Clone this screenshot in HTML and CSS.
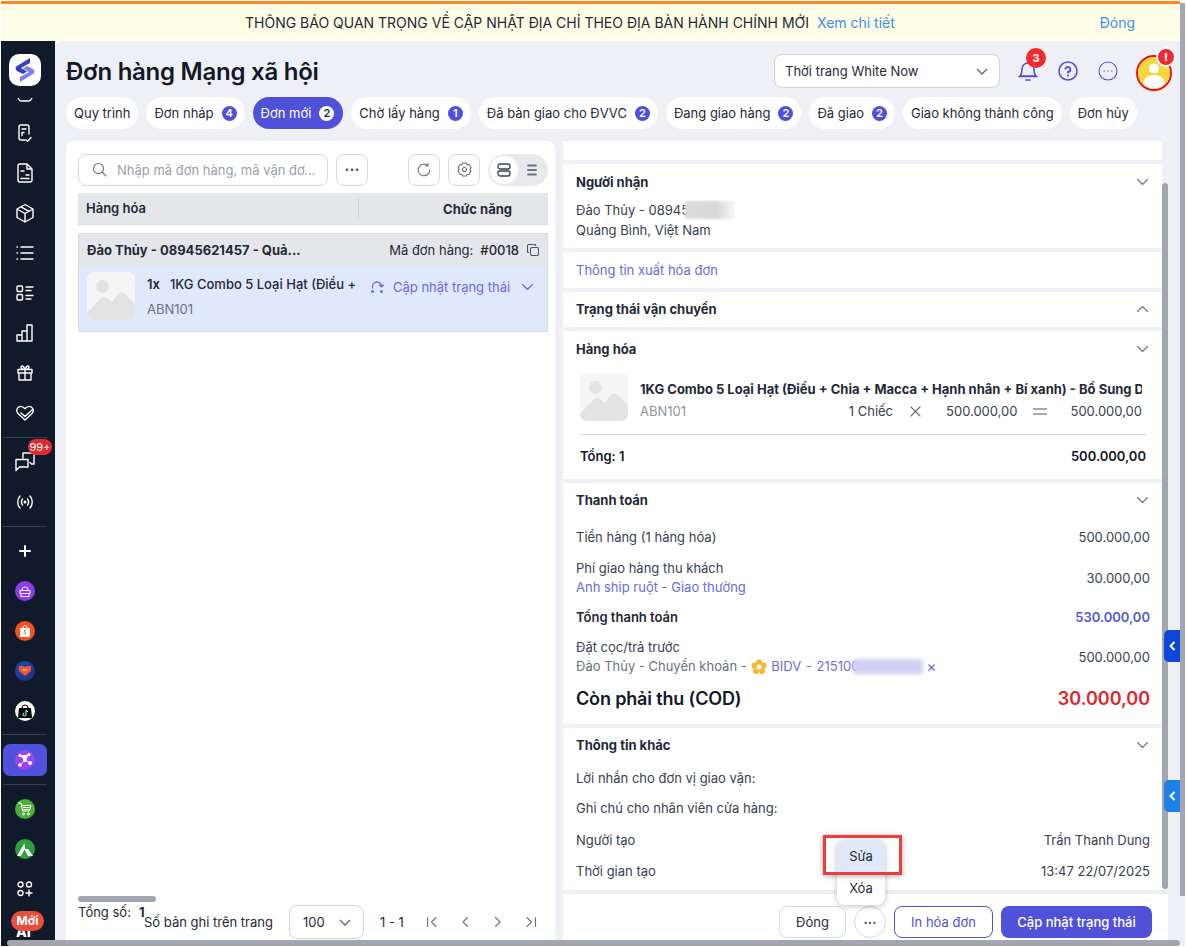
FILE: index.html
```html
<!DOCTYPE html>
<html lang="vi">
<head>
<meta charset="utf-8">
<title>Đơn hàng Mạng xã hội</title>
<link rel="stylesheet" href="styles.css">
</head>
<body>
<div class="app">
  <div class="banner">
    <div class="banner-center">
      <span>THÔNG BÁO QUAN TRỌNG VỀ CẬP NHẬT ĐỊA CHỈ THEO ĐỊA BÀN HÀNH CHÍNH MỚI</span>
      <a class="banner-link">Xem chi tiết</a>
    </div>
    <a class="banner-close">Đóng</a>
  </div>
  <div class="shell">
    <aside class="sidebar">
      <div class="logo"><svg width="22" height="26" viewBox="0 0 22 26"><path d="M16 1 3 9c-2 1.500-2 3.500 0 5l6 3 4-2.500-6-3.500 9-5z" fill="#3b3fb8"/><path d="M6 25l13-8c2-1.500 2-3.500 0-5l-6-3-4 2.500 6 3.500-9 5z" fill="#7c7ff0"/></svg></div>
      <div class="side-clip"><svg width="16" height="4" viewBox="0 0 16 4"><path d="M1 0c1 2 2 3 3 3h8c1 0 2-1 3-3" fill="none" stroke="#fff" stroke-width="1.400"/></svg></div>
      <div class="side-item"><svg width="18" height="18" viewBox="0 0 18 18" class="si"><path d="M9 16H5a2 2 0 0 1-2-2V3a2 2 0 0 1 2-2h6a2 2 0 0 1 2 2v7M6 5h4M6 8.500h2M6 8.500v3M10 16l1.500 1.200L15 13.500"/></svg></div>
      <div class="side-item"><svg width="18" height="20" viewBox="0 0 18 20" class="si"><path d="M11 1H4a2 2 0 0 0-2 2v14a2 2 0 0 0 2 2h10a2 2 0 0 0 2-2V6zM11 1v5h5M5 8h3M10 12h3M5 15.500h8"/></svg></div>
      <div class="side-item"><svg width="20" height="20" viewBox="0 0 20 20" class="si"><path d="M10 1.500 18 6v8.500l-8 4.500-8-4.500V6zM2 6l8 4.500L18 6M10 10.500V19M6 3.800l8 4.500"/></svg></div>
      <div class="side-item"><svg width="18" height="16" viewBox="0 0 18 16" class="si"><path d="M5 2h12M5 8h12M5 14h12M1 2h.500M1 8h.500M1 14h.500"/></svg></div>
      <div class="side-item"><svg width="18" height="16" viewBox="0 0 18 16" class="si"><rect x="1" y="1" width="5.500" height="5.500" rx="1"/><rect x="1" y="9.500" width="5.500" height="5.500" rx="1"/><path d="M10 2h7M10 5.500h5M10 10.500h7M10 14h5"/></svg></div>
      <div class="side-item"><svg width="18" height="18" viewBox="0 0 18 18" class="si"><path d="M1 11h5v6H1zM6 7h5v10H6zM11 1h5v16h-5z" stroke-linejoin="round"/></svg></div>
      <div class="side-item"><svg width="18" height="18" viewBox="0 0 18 18" class="si"><path d="M2 5.500h14v3.500H2zM3 9v7h12V9M9 5.500V16M9 5.500C7 5.500 5 4.500 5 3s2.500-2 4 2.500C10.500 1 13 1.500 13 3s-2 2.500-4 2.500"/></svg></div>
      <div class="side-item"><svg width="18" height="16" viewBox="0 0 18 16" class="si"><path d="M9 15 2 8.500C0 6.500.500 3 3 1.800 5.500.700 7.500 2 9 3.800c1.500-1.800 3.500-3.100 6-2 2.500 1.200 3 4.700 1 6.700zM5 8l4 3.500L16 5"/></svg></div>
      <div class="side-rule"></div>
      <div class="side-item side-chat">
        <svg width="20" height="20" viewBox="0 0 20 20" class="si chat-icon"><path d="M8 6V1h11v11h-2.500l-1.500-1.500"/><path d="M1 7.500h12V15H4.500L1 18.500z"/></svg>
        <span class="chat-badge">99+</span>
      </div>
      <div class="side-item"><svg width="18" height="14" viewBox="0 0 18 14" class="si"><path d="M4 1C1 4 1 10 4 13M14 1c3 3 3 9 0 12M6.500 4c-1.500 2-1.500 4 0 6M11.500 4c1.500 2 1.500 4 0 6"/><circle cx="9" cy="7" r=".8" fill="#fff"/></svg></div>
      <div class="side-rule rule-b"></div>
      <div class="side-item side-plus"><svg width="12" height="12" viewBox="0 0 12 12" class="si thick"><path d="M6 1v10M1 6h10"/></svg></div>
      <div class="side-item"><span class="dot dot-purple"><svg width="12" height="13" viewBox="0 0 12 13" class="si pale"><path d="M3 5a3 3 0 0 1 6 0M1 5.500h10v3H1zM2 8.500v3h8v-3"/></svg></span></div>
      <div class="side-item"><span class="dot dot-orange"><svg width="12" height="14" viewBox="0 0 12 14"><path d="M1 4h10v9H1z" fill="#fff"/><path d="M4 4a2 2.500 0 0 1 4 0" fill="none" stroke="#fff"/><path d="M7.500 6.500C6 5.500 4.500 6.500 6 8c1.500 1 0 2.500-1.500 1.500" fill="none" stroke="#ee4d2d"/></svg></span></div>
      <div class="side-item"><span class="dot dot-lazada"><svg width="14" height="12" viewBox="0 0 14 12"><path d="M1 1h4l2 1 2-1h4v5l-6 5-6-5z" fill="#f5553c"/><path d="M5 4h4v2H5z" fill="#ffa726"/></svg></span></div>
      <div class="side-item"><span class="dot dot-white"><svg width="14" height="16" viewBox="0 0 14 16"><path d="M1 5h12l1 10H0z" fill="#000"/><path d="M4 5a3 3 0 0 1 6 0" fill="none" stroke="#000"/><path d="M8 7v4.500a1.500 1.500 0 1 1-1.500-1.500M8 7c.3 1 1 1.500 2 1.500" fill="none" stroke="#7fe4ee" stroke-width="1.200"/></svg></span></div>
      <div class="side-rule rule-c"></div>
      <div class="side-active"><span class="dot dot-violet"><svg width="16" height="16" viewBox="0 0 16 16" fill="#fff"><circle cx="3" cy="3.500" r="1.500"/><circle cx="12" cy="2.500" r="1.500"/><circle cx="8" cy="8" r="2"/><circle cx="13" cy="11" r="2"/><circle cx="3" cy="13" r="1.800"/><path d="M3 3.500 8 8l4-5.500M8 8l5 3M8 8l-5 5" stroke="#fff" stroke-width=".8"/></svg></span></div>
      <div class="side-rule rule-d"></div>
      <div class="side-item side-gap"><span class="dot dot-green"><svg width="14" height="14" viewBox="0 0 14 14" class="si slim"><path d="M.500 1H3l1.500 8h7L13 3.500H3.500M5 5.500h6M5.500 7.500h5"/><circle cx="5.500" cy="12" r="1"/><circle cx="10.500" cy="12" r="1"/></svg></span></div>
      <div class="side-item"><span class="dot dot-green2"><svg width="16" height="13" viewBox="0 0 16 13"><path d="M7.500 0 0 13h4l3.500-6.500L11 13h5L11 6H8z" fill="#fff"/></svg></span></div>
      <div class="side-item"><svg width="16" height="16" viewBox="0 0 16 16" class="si"><circle cx="3.500" cy="3.500" r="2.500"/><circle cx="12" cy="3.500" r="2.500"/><circle cx="3.500" cy="12" r="2.500"/><path d="M12 9v6M9 12h6"/></svg></div>
      <div class="side-new"><span class="ai-text">AI</span><span class="new-badge">Mới</span></div>
    </aside>

    <main class="main">
      <header class="topbar">
        <h1 class="page-title">Đơn hàng Mạng xã hội</h1>
        <div class="top-right">
          <div class="select shop-select"><span>Thời trang White Now</span><svg width="12" height="7" viewBox="0 0 12 7" class="chev"><path d="M1 1l5 5 5-5"/></svg></div>
          <div class="icon-bell">
            <svg width="20" height="22" viewBox="0 0 20 22" class="blue-ico"><path d="M2 16c2-2 2-4 2-7a6 6 0 0 1 12 0c0 3 0 5 2 7zM1 16.500h18M8 20h4" /></svg>
            <span class="bell-badge">3</span>
          </div>
          <svg width="20" height="20" viewBox="0 0 20 20" class="blue-ico"><circle cx="10" cy="10" r="9"/><path d="M7.500 7.800A2.500 2.500 0 1 1 10 11v.7M10 14.300v.4" stroke-width="1.800"/></svg>
          <svg width="20" height="20" viewBox="0 0 20 20" class="blue-ico thin"><circle cx="10" cy="10" r="9"/><path d="M6 10h.6M9.700 10h.6M13.400 10h.6"/></svg>
          <div class="avatar">
            <svg width="32" height="32" viewBox="0 0 32 32"><circle cx="16" cy="16" r="16" fill="#f6d63f"/><circle cx="16" cy="11.500" r="5" fill="#fff"/><path d="M5 27c1-7 6-9 11-9s10 2 11 9a16 16 0 0 1-22 0z" fill="#fff"/></svg>
            <span class="avatar-badge">!</span>
          </div>
        </div>
      </header>

      <nav class="tabs">
        <span class="tab">Quy trình</span>
        <span class="tab">Đơn nháp<b class="count">4</b></span>
        <span class="tab tab-on">Đơn mới<b class="count">2</b></span>
        <span class="tab">Chờ lấy hàng<b class="count">1</b></span>
        <span class="tab">Đã bàn giao cho ĐVVC<b class="count">2</b></span>
        <span class="tab">Đang giao hàng<b class="count">2</b></span>
        <span class="tab">Đã giao<b class="count">2</b></span>
        <span class="tab">Giao không thành công</span>
        <span class="tab">Đơn hủy</span>
      </nav>

      <div class="content">
        <section class="left">
          <div class="toolbar">
            <div class="search">
              <svg width="15" height="15" viewBox="0 0 15 15" class="grey-ico"><circle cx="6.500" cy="6.500" r="5"/><path d="M10.500 10.500 14 14"/></svg>
              <span class="placeholder">Nhập mã đơn hàng, mã vận đơ...</span>
            </div>
            <button class="sq-btn dots">···</button>
            <div class="toolbar-right">
              <button class="sq-btn"><svg width="14" height="14" viewBox="0 0 14 14" class="grey-ico"><path d="M12.800 7A5.800 5.800 0 1 1 10.800 2.600M11 .5v2.500H8.500"/></svg></button>
              <button class="sq-btn"><svg width="15" height="15" viewBox="0 0 15 15" class="grey-ico"><path d="M5.500 1h4l.6 1.800 1.900-.3 2 3.400-1.300 1.600 1.300 1.600-2 3.400-1.900-.3-.6 1.800h-4l-.6-1.800-1.900.3-2-3.400L2.300 7.500 1 5.900l2-3.400 1.900.3z" stroke-dasharray="3 .6"/><circle cx="7.500" cy="7.500" r="2"/></svg></button>
              <div class="switch">
                <span class="sw-on"><svg width="14" height="14" viewBox="0 0 14 14" class="dark-ico"><rect x="1" y="1" width="12" height="5" rx="2"/><rect x="1" y="8" width="12" height="5" rx="2"/></svg></span>
                <span class="sw-off"><svg width="10" height="12" viewBox="0 0 10 12" class="grey-ico"><path d="M1 1.500h8M1 6h8M1 10.500h8" stroke-width="1.800"/></svg></span>
              </div>
            </div>
          </div>

          <div class="thead">
            <span class="th-name">Hàng hóa</span>
            <span class="th-func">Chức năng</span>
          </div>

          <div class="order">
            <div class="order-head">
              <span class="order-who">Đào Thủy - 08945621457 - Quả...</span>
              <span class="order-code">Mã đơn hàng:<b>#0018</b></span>
              <svg width="12" height="12" viewBox="0 0 12 12" class="grey-ico dark"><rect x="3.500" y="3.500" width="8" height="8" rx="1.500"/><path d="M8.500 1.500V1a.5.5 0 0 0-.5-.5H2A1.500 1.500 0 0 0 .5 2v6a.5.5 0 0 0 .5.5h.5"/></svg>
            </div>
            <div class="order-row">
              <svg width="48" height="48" viewBox="0 0 48 48" class="thumb"><rect width="48" height="48" rx="7" fill="#f5f5f5"/><circle cx="15.500" cy="14.500" r="6.500" fill="#e3e3e3"/><path d="M0 41 14 26c2-1.500 4-1.500 6 0l5 4 6-8c2-2 5-2 7 0l10 10v9a7 7 0 0 1-7 7H7a7 7 0 0 1-7-7z" fill="#e3e3e3"/></svg>
              <div class="order-info">
                <div class="order-title"><b>1x</b><span>1KG Combo 5 Loại Hạt (Điều +</span></div>
                <div class="sku">ABN101</div>
              </div>
              <div class="order-action">
                <svg width="14" height="14" viewBox="0 0 14 14" class="vio-ico"><path d="M2.500 8V6.500a4.500 4.500 0 0 1 9 0V7M9.500 5 11.500 7 13.500 5"/><circle cx="2.500" cy="11.500" r="1.500" fill="#6a6be0" stroke="none"/><circle cx="11.500" cy="11.500" r="1.500" fill="#6a6be0" stroke="none"/></svg>
                <span>Cập nhật trạng thái</span>
                <svg width="11" height="6" viewBox="0 0 11 6" class="vio-ico"><path d="M.5.500l5 5 5-5"/></svg>
              </div>
            </div>
          </div>

          <div class="left-foot">
            <div class="hscroll"></div>
            <div class="pager">
              <span class="total">Tổng số:<b>1</b></span>
              <span class="per">Số bản ghi trên trang</span>
              <div class="select page-select"><span>100</span><svg width="12" height="7" viewBox="0 0 12 7" class="chev"><path d="M1 1l5 5 5-5"/></svg></div>
              <span class="range">1 - 1</span>
              <div class="pager-btns">
                <svg width="12" height="12" viewBox="0 0 12 12" class="grey-ico"><path d="M1.500 1.500v9M10 1.500 5.500 6 10 10.500"/></svg>
                <svg width="12" height="12" viewBox="0 0 12 12" class="grey-ico"><path d="M8.500 1.500 4 6l4.500 4.500"/></svg>
                <svg width="12" height="12" viewBox="0 0 12 12" class="grey-ico"><path d="M3.500 1.500 8 6l-4.500 4.500"/></svg>
                <svg width="12" height="12" viewBox="0 0 12 12" class="grey-ico"><path d="M10.500 1.500v9M2 1.500 6.500 6 2 10.500"/></svg>
              </div>
            </div>
          </div>
        </section>

        <section class="right">
          <div class="detail">
            <div class="panel stub"></div>
            <div class="panel p-recv">
              <div class="p-head"><h2>Người nhận</h2><svg width="11" height="6" viewBox="0 0 11 6" class="grey-ico"><path d="M.5.500l5 5 5-5"/></svg></div>
              <div class="line recv-phone"><span>Đào Thủy - 08945</span><i class="blur-grey"></i></div>
              <div class="line">Quảng Bình, Việt Nam</div>
            </div>
            <div class="panel p-invoice"><a class="vio">Thông tin xuất hóa đơn</a></div>
            <div class="panel p-ship">
              <div class="p-head"><h2>Trạng thái vận chuyển</h2><svg width="11" height="6" viewBox="0 0 11 6" class="grey-ico"><path d="M.5 5.500l5-5 5 5"/></svg></div>
            </div>
            <div class="panel p-goods">
              <div class="p-head"><h2>Hàng hóa</h2><svg width="11" height="6" viewBox="0 0 11 6" class="grey-ico"><path d="M.5.500l5 5 5-5"/></svg></div>
              <div class="good">
                <svg width="48" height="48" viewBox="0 0 48 48" class="thumb"><rect width="48" height="48" rx="7" fill="#f5f5f5"/><circle cx="15.500" cy="14.500" r="6.500" fill="#e3e3e3"/><path d="M0 41 14 26c2-1.500 4-1.500 6 0l5 4 6-8c2-2 5-2 7 0l10 10v9a7 7 0 0 1-7 7H7a7 7 0 0 1-7-7z" fill="#e3e3e3"/></svg>
                <div class="good-info">
                  <div class="good-name">1KG Combo 5 Loại Hạt (Điều + Chia + Macca + Hạnh nhân + Bí xanh) - Bổ Sung Dinh Dưỡng</div>
                  <div class="good-line">
                    <span class="sku">ABN101</span>
                    <span class="g-qty">1 Chiếc</span>
                    <svg width="11" height="11" viewBox="0 0 12 12" class="grey-ico dark"><path d="M1 1l10 10M11 1 1 11"/></svg>
                    <span class="g-price">500.000,00</span>
                    <svg width="14" height="7" viewBox="0 0 14 7" class="grey-ico dark"><path d="M0 1h14M0 6h14"/></svg>
                    <span class="g-sum">500.000,00</span>
                  </div>
                </div>
              </div>
              <div class="goods-total"><b>Tổng: 1</b><b>500.000,00</b></div>
            </div>
            <div class="panel p-pay">
              <div class="p-head"><h2>Thanh toán</h2><svg width="11" height="6" viewBox="0 0 11 6" class="grey-ico"><path d="M.5.500l5 5 5-5"/></svg></div>
              <div class="pay-row r-goods"><span>Tiền hàng (1 hàng hóa)</span><span>500.000,00</span></div>
              <div class="pay-row r-fee"><div><div>Phí giao hàng thu khách</div><div class="vio sub">Anh ship ruột<span class="muted"> - </span>Giao thường</div></div><span>30.000,00</span></div>
              <div class="pay-row r-sum"><b>Tổng thanh toán</b><b class="vio-strong">530.000,00</b></div>
              <div class="pay-row r-dep">
                <div><div>Đặt cọc/trả trước</div>
                  <div class="dep-line"><span class="muted">Đào Thủy - Chuyển khoản - </span><svg width="16" height="16" viewBox="0 0 16 16" class="flower"><circle cx="8" cy="3.500" r="3" fill="#f8b62d"/><circle cx="12.500" cy="6.500" r="3" fill="#f8b62d"/><circle cx="11" cy="12" r="3" fill="#f8b62d"/><circle cx="5" cy="12" r="3" fill="#f8b62d"/><circle cx="3.500" cy="6.500" r="3" fill="#f8b62d"/><circle cx="8" cy="8" r="2.500" fill="#fff"/></svg><span class="vio bank">BIDV - 215100</span><i class="blur-vio"></i><span class="vio x">×</span></div>
                </div>
                <span>500.000,00</span>
              </div>
              <div class="pay-row r-cod"><b>Còn phải thu (COD)</b><b class="red">30.000,00</b></div>
            </div>
            <div class="panel p-other">
              <div class="p-head"><h2>Thông tin khác</h2><svg width="11" height="6" viewBox="0 0 11 6" class="grey-ico"><path d="M.5.500l5 5 5-5"/></svg></div>
              <div class="line o1">Lời nhắn cho đơn vị giao vận:</div>
              <div class="line o2">Ghi chú cho nhân viên cửa hàng:</div>
              <div class="pay-row o3"><span>Người tạo</span><span>Trần Thanh Dung</span></div>
              <div class="pay-row o4"><span>Thời gian tạo</span><span>13:47 22/07/2025</span></div>
            </div>
          </div>
          <div class="actions">
            <button class="btn btn-plain">Đóng</button>
            <button class="btn-more">···</button>
            <button class="btn btn-line">In hóa đơn</button>
            <button class="btn btn-fill">Cập nhật trạng thái</button>
          </div>
        </section>
      </div>
    </main>
  </div>

  <div class="menu">
    <div class="menu-item menu-on">Sửa</div>
    <div class="menu-item">Xóa</div>
  </div>
  <div class="callout"></div>
  <div class="vbar"></div>
  <div class="outer-vbar"></div>
  <div class="outer-hbar"></div>
  <div class="side-tab tab-a"><svg width="7" height="10" viewBox="0 0 7 10"><path d="M5.500 1 1.500 5l4 4" fill="none" stroke="#fff" stroke-width="2"/></svg></div>
  <div class="side-tab tab-b"><svg width="7" height="10" viewBox="0 0 7 10"><path d="M5.500 1 1.500 5l4 4" fill="none" stroke="#fff" stroke-width="2"/></svg></div>
</div>
</body>
</html>
```

FILE: styles.css
```css
* { box-sizing: border-box; }
html, body { margin: 0; height: 100%; overflow: hidden; }
body { background: #fff; font-family: Inter, "Noto Sans", sans-serif; font-size: 13px; color: #111827; }
.app { position: relative; width: 1187px; height: 947px; padding: 1px 7px 1px 1px; display: flex; flex-direction: column; }
h1, h2 { margin: 0; }
button { font-family: inherit; }

.banner { height: 40px; flex: none; border-top: 3px solid #f98a24; background: #fffde6; display: flex; align-items: center; font-size: 14px; padding: 0 45px 0 244px; }
.banner-center { flex: 1; display: flex; gap: 8px; color: #1f2937; }
.banner-link, .banner-close { color: #3d8fe8; }

.shell { flex: 1; display: flex; min-height: 0; }
.sidebar { width: 54px; flex: none; background: #111a2b; display: flex; flex-direction: column; align-items: center; position: relative; padding: 13px 6px 0 0; overflow: hidden; }
.logo { width: 32px; height: 32px; border-radius: 10px; background: #fff; display: flex; align-items: center; justify-content: center; flex: none; }
.side-clip { height: 4px; margin-top: 11px; line-height: 0; flex: none; }
.side-item { height: 40px; width: 100%; display: flex; align-items: center; justify-content: center; position: relative; flex: none; }
.side-clip + .side-item { margin-top: 12px; }
.si { fill: none; stroke: #fff; stroke-width: 1.400; stroke-linecap: round; stroke-linejoin: round; }
.si.thick { stroke-width: 2; }
.si.pale { stroke: #f0ddff; stroke-width: 1.200; }
.si.slim { stroke-width: 1; }
.side-rule { width: 44px; height: 1px; background: #3a4150; flex: none; margin: 4px 0 3px; }
.rule-b { margin: 4px 0 4px; }
.rule-c { margin: 3px 0 9px; }
.rule-d { margin: 8px 0 4px; }
.side-chat { height: 41px; }
.chat-icon { margin-top: 1px; }
.chat-badge { position: absolute; left: 27px; top: -2px; height: 16px; width: 24px; border-radius: 8px; background: #e02a2f; color: #fff; font-size: 11px; line-height: 16px; text-align: center; }
.dot { width: 20px; height: 20px; border-radius: 50%; display: flex; align-items: center; justify-content: center; }
.dot-purple { background: #8a3fe6; }
.dot-orange { background: #f4511e; }
.dot-lazada { background: linear-gradient(135deg, #1a52b8, #1b2a78); }
.dot-white { background: #fff; }
.dot-violet { background: #9b44f0; }
.dot-green { background: #4bb136; }
.dot-green2 { background: #2ca338; }
.side-active { width: 44px; height: 32px; border-radius: 7px; background: #4f52dc; display: flex; align-items: center; justify-content: center; flex: none; }
.side-new { position: relative; height: 40px; width: 100%; flex: none; }
.new-badge { position: absolute; left: 10px; top: 2px; width: 33px; height: 20px; border-radius: 10px; background: #ea4e3d; color: #fff; font-size: 12px; font-weight: 700; line-height: 20px; text-align: center; }
.ai-text { position: absolute; left: 15px; top: 14px; color: #fff; font-weight: 800; font-size: 14px; }

.main { flex: 1; background: #eef0f5; padding: 0 12px 0 11px; display: flex; flex-direction: column; min-width: 0; border-top-left-radius: 8px; }
.topbar { height: 56px; flex: none; display: flex; align-items: center; justify-content: space-between; }
.page-title { font-size: 24px; font-weight: 600; line-height: 30px; color: #111827; margin-top: 2px; letter-spacing: -.25px; padding-top: 4px; }
.top-right { display: flex; align-items: center; margin-right: -4px; margin-top: 4px; }
.select { background: #fff; border: 1px solid #cfd2d8; border-radius: 8px; display: flex; align-items: center; justify-content: space-between; }
.shop-select { width: 226px; height: 34px; padding: 0 11px 0 10px; margin-right: 18px; color: #1f2937; }
.chev { fill: none; stroke: #6b7280; stroke-width: 1.500; }
.icon-bell { position: relative; width: 20px; height: 22px; margin-right: 20px; }
.blue-ico { fill: none; stroke: #4f52d8; stroke-width: 1.600; stroke-linecap: round; stroke-linejoin: round; flex: none; }
.blue-ico.thin { stroke-width: 1.100; margin: 0 18px 0 20px; }
.bell-badge { position: absolute; left: 8px; top: -12px; width: 20px; height: 20px; border-radius: 50%; background: #f02a2e; color: #fff; font-size: 11px; font-weight: 700; line-height: 20px; text-align: center; }
.avatar { position: relative; width: 36px; height: 36px; border-radius: 50%; border: 2px solid #f00f0f; margin-top: 4px; }
.avatar svg { display: block; margin: 0; }
.avatar-badge { position: absolute; left: 18px; top: -10px; width: 20px; height: 20px; border-radius: 50%; background: #f02a2e; border: 2px solid #fff; color: #fff; font-size: 11px; font-weight: 800; line-height: 16px; text-align: center; }

.tabs { height: 32px; flex: none; display: flex; gap: 8px; }
.tab { height: 32px; border-radius: 16px; background: #fff; padding: 0 8px; display: flex; align-items: center; white-space: nowrap; color: #1f2937; }
.tab .count { width: 15px; height: 15px; border-radius: 50%; background: #4f52d8; color: #fff; font-size: 11px; font-weight: 600; line-height: 15px; text-align: center; margin-left: 8px; }
.tab-on { background: #4f52d8; color: #fff; padding-right: 9px; }
.tab-on .count { background: #fff; color: #1f2937; }

.content { flex: 1; display: flex; gap: 8px; margin-top: 12px; min-height: 0; }
.left { width: 489px; flex: none; background: #fff; border-radius: 8px 8px 0 0; display: flex; flex-direction: column; padding: 12px 7px 4px 12px; min-height: 0; }
.toolbar { height: 33px; display: flex; align-items: center; gap: 8px; flex: none; }
.search { width: 250px; height: 32px; border: 1px solid #d5d8de; border-radius: 8px; display: flex; align-items: center; gap: 10px; padding: 0 13px; }
.placeholder { color: #9aa0aa; white-space: nowrap; }
.sq-btn { width: 32px; height: 32px; border: 1px solid #d5d8de; border-radius: 8px; background: #fff; display: flex; align-items: center; justify-content: center; padding: 0; color: #555; }
.dots { font-size: 15px; font-weight: 700; }
.toolbar-right { margin-left: auto; display: flex; gap: 8px; align-items: center; }
.grey-ico { fill: none; stroke: #6b7280; stroke-width: 1.100; stroke-linecap: round; stroke-linejoin: round; flex: none; }
.grey-ico.dark { stroke: #4b5563; }
.dark-ico { fill: none; stroke: #374151; stroke-width: 1.300; }
.vio-ico { fill: none; stroke: #6a6be0; stroke-width: 1.300; stroke-linecap: round; stroke-linejoin: round; flex: none; }
.switch { width: 60px; height: 32px; border-radius: 16px; background: #e8e9ec; display: flex; align-items: center; padding: 2px; }
.sw-on { width: 28px; height: 28px; background: #fff; border-radius: 14px; display: flex; align-items: center; justify-content: center; }
.sw-off { flex: 1; display: flex; justify-content: center; }
.thead { height: 32px; flex: none; margin-top: 7px; background: #e5e6ea; border-bottom: 1px solid #d8dae0; display: flex; align-items: center; font-weight: 600; color: #1f2937; }
.th-name { width: 281px; height: 21px; padding-left: 8px; border-right: 1px solid #d2d4da; line-height: 21px; }
.th-func { margin-left: auto; margin-right: 36px; font-weight: 700; }
.order { margin-top: 8px; border: 1px solid #d6dbe8; flex: none; }
.order-head { height: 32px; background: #e5e6ea; display: flex; align-items: center; padding: 0 8px; gap: 8px; }
.order-who { font-weight: 700; flex: 1; color: #1f2937; }
.order-code { color: #1f2937; }
.order-code b { font-weight: 500; margin-left: 7px; }
.order-row { height: 65px; background: #e0e8fb; display: flex; padding: 6px 8px; }
.thumb { flex: none; display: block; }
.order-info { margin-left: 12px; width: 210px; }
.order-title { font-weight: 500; padding-top: 4px; white-space: nowrap; display: flex; gap: 10px; color: #1f2937; }
.order-title b { font-weight: 600; }
.sku { color: #6b7280; margin-top: 9px; }
.order-action { display: flex; align-items: center; gap: 9px; color: #6a6be0; height: 20px; margin-top: 5px; margin-left: 13px; white-space: nowrap; }
.order-action svg:last-child { margin-left: 3px; }
.left-foot { margin-top: auto; flex: none; }
.hscroll { width: 78px; height: 6px; border-radius: 3px; background: #a2a6b0; }
.pager { height: 40px; display: flex; color: #1f2937; align-items: center; }
.total { align-self: flex-start; white-space: nowrap; width: 66px; margin-top: 2px; }
.total b { font-weight: 700; margin-left: 8px; }
.per { white-space: nowrap; }
.page-select { width: 75px; height: 34px; padding: 0 12px 0 13px; margin-left: 16px; }
.range { margin-left: 16px; white-space: nowrap; }
.pager-btns { display: flex; gap: 21px; margin-left: 22px; }

.right { flex: 1; min-width: 0; background: #fff; display: flex; flex-direction: column; position: relative; border-radius: 8px 8px 0 0; }
.detail { flex: 1; min-height: 0; overflow: hidden; background: #eef0f5; display: flex; flex-direction: column; gap: 4px; padding-right: 6px; border-bottom: 4px solid #eef0f5; }
.panel { background: #fff; padding: 0 12px 0 13px; flex: none; }
.stub { height: 19px; }
.p-head { display: flex; align-items: center; justify-content: space-between; height: 20px; padding-right: 1px; }
.p-head svg { margin-right: 1px; }
.p-head h2 { font-size: 13px; font-weight: 700; color: #1f2937; }
.line { color: #374151; line-height: 19px; white-space: nowrap; }
.p-recv { height: 84px; padding-top: 8px; }
.recv-phone { margin-top: 8px; height: 21px; position: relative; line-height: 21px; }
.blur-grey { position: absolute; left: 109px; top: 1px; width: 50px; height: 18px; background: linear-gradient(90deg, #dcdcdc, #d8d8d8 65%, #f8f8f8); filter: blur(1px); }
.p-invoice { height: 36px; display: flex; align-items: center; }
.vio { color: #6a6be0; }
.p-ship { height: 35px; padding-top: 7px; }
.p-goods { height: 148px; padding-top: 8px; padding-right: 16px; }
.p-goods .p-head { margin-right: -4px; }
.good { display: flex; margin: 14px 0 0 4px; height: 48px; }
.good-info { margin-left: 12px; flex: 1; min-width: 0; }
.good-name { font-weight: 700; white-space: nowrap; overflow: hidden; padding-top: 8px; height: 26px; margin-right: 4px; color: #1f2937; }
.good-line { display: flex; align-items: center; height: 22px; margin-top: 1px; margin-right: 4px; }
.good-line .sku { margin: 0; color: #8f949d; flex: 1; }
.g-qty { margin-right: 17px; color: #374151; }
.g-price { margin: 0 15px 0 25px; color: #374151; }
.g-sum { margin-left: 24px; color: #374151; }
.goods-total { margin: 13px 0 0 4px; padding-top: 13px; border-top: 1px solid #d5d7dc; display: flex; justify-content: space-between; }
.goods-total b { font-weight: 600; }
.p-pay { height: 241px; padding-top: 7px; }
.pay-row { display: flex; justify-content: space-between; align-items: center; color: #374151; line-height: 19px; }
.p-head + .r-goods { margin-top: 18px; }
.r-fee { margin-top: 12px; }
.muted { color: #6b7280; white-space: pre; }
.r-sum { margin-top: 11px; }
.r-sum b { font-weight: 600; color: #1f2937; }
.r-sum .vio-strong { color: #5659d8; }
.r-dep { margin-top: 11px; }
.dep-line { display: flex; align-items: center; white-space: nowrap; position: relative; }
.flower { margin: 0 4px 0 1px; }
.bank { word-spacing: 1px; }
.blur-vio { width: 70px; height: 15px; background: #cfcff1; filter: blur(2px); margin-left: -6px; }
.x { margin-left: 3px; font-size: 15px; line-height: 15px; }
.r-cod { margin-top: 11px; }
.r-cod b { font-size: 18px; font-weight: 600; line-height: 24px; color: #111827; letter-spacing: -.15px; }
.r-cod .red { color: #e3242b; letter-spacing: 0; }
.p-other { height: 162px; padding-top: 7px; }
.o1 { margin-top: 14px; }
.o2 { margin-top: 11px; }
.o3 { margin-top: 13px; }
.o4 { margin-top: 12px; }
.actions { height: 52px; flex: none; display: flex; justify-content: flex-end; align-items: center; gap: 8px; padding: 4px 16px 0 0; background: #fff; }
.btn { height: 32px; border-radius: 8px; font-size: 13px; padding: 0; background: #fff; }
.btn-plain { width: 67px; border: 1px solid #d5d8de; color: #1f2937; }
.btn-more { width: 32px; height: 32px; border-radius: 50%; border: 1px solid #d5d8de; background: #fff; color: #555; font-weight: 700; font-size: 13px; padding: 0; }
.btn-line { width: 99px; border: 1px solid #4f52d8; color: #4f52d8; }
.btn-fill { width: 151px; border: 0; background: #4f52d8; color: #fff; font-weight: 500; }

.menu { position: absolute; left: 837px; top: 840px; width: 48px; height: 65px; border-radius: 8px; background: #fff; box-shadow: 0 1px 6px rgba(0, 0, 0, .25); overflow: hidden; }
.menu-item { height: 32px; line-height: 32px; text-align: center; color: #1f2937; }
.menu-on { background: #e0e8fb; }
.callout { position: absolute; left: 823px; top: 835px; width: 79px; height: 40px; border: 3px solid #ee3b3b; box-shadow: 0 1px 5px rgba(0, 0, 0, .35); }
.vbar { position: absolute; left: 1162px; top: 183px; width: 6px; height: 706px; border-radius: 3px; background: #a2a6b0; }
.outer-vbar { position: absolute; left: 1180px; top: 3px; width: 5px; height: 943px; background: linear-gradient(#a2a6b0 893px, #eef0f5 893px); }
.outer-hbar { position: absolute; left: 7px; top: 940px; width: 1173px; height: 6px; border-radius: 3px; background: #a2a6b0; }
.side-tab { position: absolute; left: 1164px; width: 16px; height: 32px; border-radius: 5px 0 0 5px; display: flex; align-items: center; justify-content: center; }
.tab-a { top: 630px; background: #0d47d9; }
.tab-b { top: 780px; background: #1e80e8; }
```
